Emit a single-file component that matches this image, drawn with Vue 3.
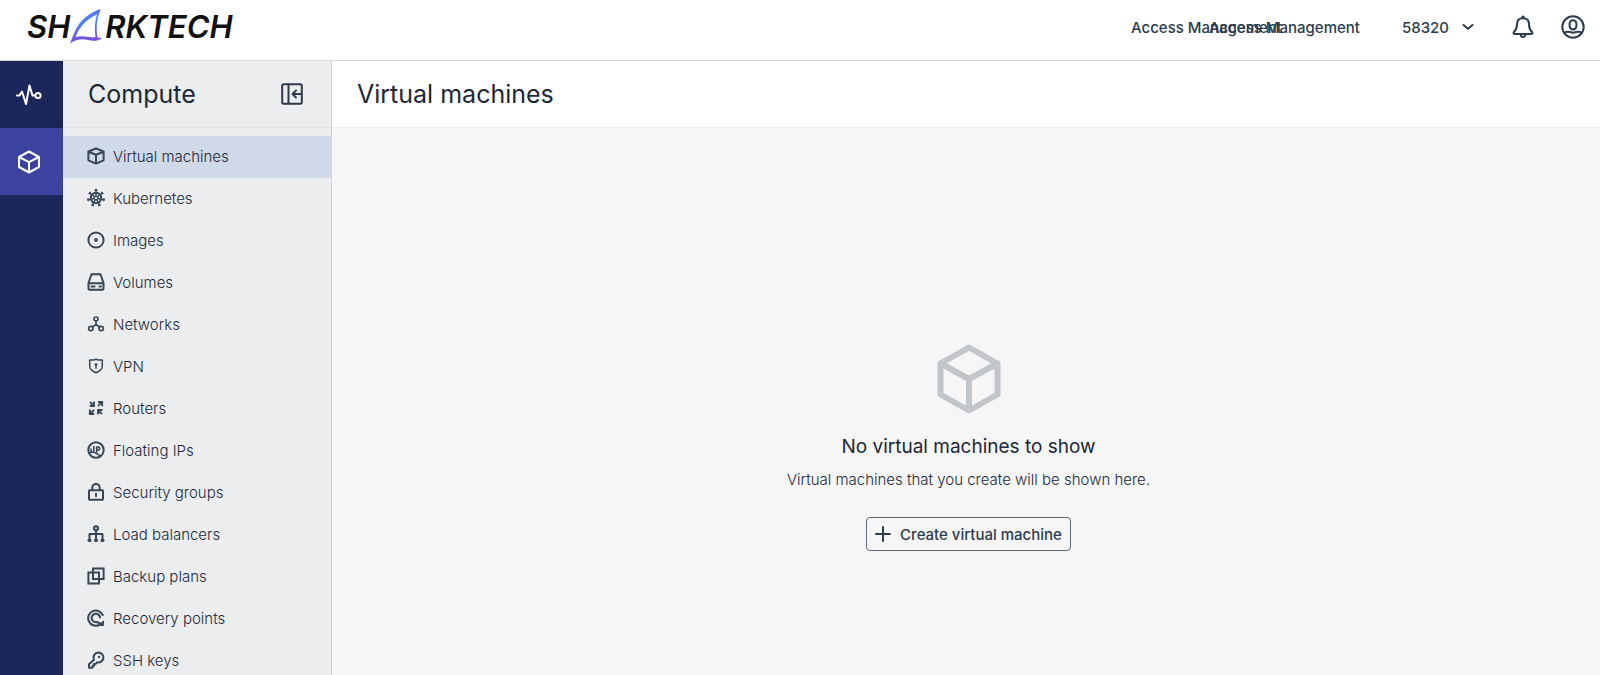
<script setup>
import { ref } from 'vue'

const account = ref('58320')
const collapsed = ref(false)
const active = ref('Virtual machines')

const items = [
  { label: 'Virtual machines', icon: 'cube' },
  { label: 'Kubernetes', icon: 'helm' },
  { label: 'Images', icon: 'disc' },
  { label: 'Volumes', icon: 'drive' },
  { label: 'Networks', icon: 'network' },
  { label: 'VPN', icon: 'shield' },
  { label: 'Routers', icon: 'router' },
  { label: 'Floating IPs', icon: 'ip' },
  { label: 'Security groups', icon: 'lock' },
  { label: 'Load balancers', icon: 'tree' },
  { label: 'Backup plans', icon: 'copy' },
  { label: 'Recovery points', icon: 'recover' },
  { label: 'SSH keys', icon: 'key' },
]

// spokes of the Kubernetes wheel, in degrees
const spokes = Array.from({ length: 7 }, (_, i) => (i * 360) / 7)
</script>

<template>
  <div class="app">
    <header class="topbar">
      <a href="#" class="logo" aria-label="Sharktech">
        <span>SH</span>
        <svg class="fin" viewBox="0 0 32 36" width="32" height="36">
          <defs>
            <linearGradient id="fin" x1="0" y1="0" x2="0.2" y2="1">
              <stop offset="0" stop-color="#5a6fe6" />
              <stop offset="0.5" stop-color="#4f83f5" />
              <stop offset="1" stop-color="#7a4be0" />
            </linearGradient>
          </defs>
          <path
            fill="url(#fin)"
            fill-rule="evenodd"
            d="M31 0C20 3 10 11 5 22L0 34.500C6 30.500 12 29.500 18 31C24 32.500 28 32 32 29L27.500 28.500C26 19 26.500 9 31 0ZM27 5.500C24.500 13 24.500 20 25.500 28C20 29.500 14 26 5.500 28C9.500 17.500 17 10 27 5.500Z"
          />
        </svg>
        <span>RKTECH</span>
      </a>
      <nav class="toplinks">
        <a href="#" class="toplink">Access Management</a>
        <a href="#" class="toplink">Access Management</a>
      </nav>
      <div class="account">
        <select v-model="account" aria-label="Account">
          <option>58320</option>
        </select>
        <svg class="chevron" viewBox="0 0 12 12" width="12" height="12"><path d="M1.500 4l4.500 3.800L10.500 4" /></svg>
      </div>
      <button class="iconbtn" aria-label="Notifications">
        <svg viewBox="0 0 24 24" width="24" height="24">
          <path d="M12 3.200c-4 0-6 2.800-6 6.300 0 4-1 5.700-3 7.500-.8.900-.4 2 .8 2h16.400c1.200 0 1.600-1.100.8-2-2-1.800-3-3.500-3-7.500 0-3.500-2-6.300-6-6.300z" />
          <circle cx="12" cy="2.300" r=".8" />
          <path d="M9.800 19.500a2.200 2.600 0 0 0 4.400 0" />
        </svg>
      </button>
      <button class="iconbtn" aria-label="Profile">
        <svg viewBox="0 0 24 24" width="24" height="24">
          <circle cx="12" cy="12" r="10.700" />
          <rect x="8.600" y="5.300" width="6.800" height="9.200" rx="3.400" />
          <path d="M3.500 17.500c3-1.800 5-1 8.500.3 3.500-1.300 5.500-2.100 8.500-.3" />
        </svg>
      </button>
    </header>

    <div class="body">
      <nav class="rail" aria-label="Sections">
        <button class="rail-item" aria-label="Overview">
          <svg viewBox="0 0 26 22" width="26" height="22">
            <path d="M1 11.500h2.500L6 7.500l4 12.500L13.500 1.500l3 10H19" />
            <circle cx="22" cy="11.500" r="2.600" />
          </svg>
        </button>
        <button class="rail-item active" aria-label="Compute">
          <svg viewBox="0 0 24 24" width="24" height="24">
            <path d="M12 1.500l10 5.500v10L12 22.500 2 17V7zM2 7l10 5.200L22 7M12 12.200v10" />
          </svg>
        </button>
      </nav>

      <aside class="sidebar">
        <div class="sidebar-head">
          <h2>Compute</h2>
          <button class="collapse" aria-label="Collapse menu" @click="collapsed = !collapsed">
            <svg viewBox="0 0 22 22" width="22" height="22">
              <rect x="1.200" y="1.200" width="19.600" height="19.600" rx="1.500" />
              <path d="M7.500 1.500v19M20 11h-8M15 7.500L11.500 11l3.500 3.500" />
            </svg>
          </button>
        </div>
        <ul v-show="!collapsed" class="menu">
          <li v-for="item in items" :key="item.label">
            <a href="#" :class="{ active: active === item.label }" @click.prevent="active = item.label">
              <svg viewBox="0 0 18 18" width="18" height="18">
                <path v-if="item.icon === 'cube'" d="M9 1.500l7.600 3v8.800L9 16.600l-7.600-3.300V4.500zM1.400 4.700L9 7.800l7.600-3.100M9 7.800v8.800" />
                <g v-else-if="item.icon === 'helm'">
                  <circle cx="9" cy="9" r="5.200" />
                  <circle cx="9" cy="9" r="1.800" stroke-width="1.300" />
                  <g v-for="a in spokes" :key="a" :transform="`rotate(${a} 9 9)`">
                    <path d="M9 7V1" stroke-width="1.500" />
                    <path d="M8.400 1h1.200" stroke-width="1.800" />
                  </g>
                </g>
                <g v-else-if="item.icon === 'disc'">
                  <circle cx="9" cy="9" r="7.600" />
                  <circle cx="9" cy="9" r="1.900" class="solid" />
                </g>
                <g v-else-if="item.icon === 'drive'">
                  <path d="M4.500 1.200h9l3 8.800v5.500q0 1.300-1.300 1.300H2.800q-1.300 0-1.300-1.300V10zM1.700 10.200h14.600" />
                  <path d="M4.500 13.500h3M12.500 13.500h1.500" />
                </g>
                <g v-else-if="item.icon === 'network'" stroke-width="1.600">
                  <circle cx="9" cy="4" r="2" />
                  <circle cx="3.800" cy="13.600" r="2.200" />
                  <circle cx="14.200" cy="13.600" r="2.200" />
                  <path d="M9 6v3.500L5.400 12M9 9.500l3.600 2.500" />
                </g>
                <g v-else-if="item.icon === 'shield'" stroke-width="1.500">
                  <path d="M9 2.200c2 .8 4 .9 6.300.9v6.200c0 3.200-2.600 5-6.300 6.400-3.700-1.400-6.300-3.200-6.300-6.400V3.100C5 3.100 7 3 9 2.200z" />
                  <circle cx="9" cy="7.600" r="1.400" class="solid" />
                  <path d="M9 8v3.200" />
                </g>
                <g v-else-if="item.icon === 'router'" stroke-width="1.800" stroke-linecap="butt" stroke-linejoin="miter">
                  <path d="M3 3l3.500 3.500M7 2.500V7H2.800M11 7.200l3.500-3.700M11 3h4.200v4.200M7 11l-4 4M2.800 10.500V15H7.200M15 15.200l-3.700-3.700M11 15.500V11h4.500" />
                </g>
                <g v-else-if="item.icon === 'ip'">
                  <circle cx="9" cy="9" r="7.700" />
                  <path d="M6.800 5.500V10M9.700 11V6h1.500a1.500 1.500 0 0 1 0 3H10" stroke-width="1.600" />
                  <path d="M2 12l4-1c3 0 4 3 7 3.500M4 8v3" stroke-width="1.500" />
                </g>
                <g v-else-if="item.icon === 'lock'">
                  <rect x="2" y="7.300" width="14" height="9.400" rx=".6" />
                  <path d="M5.300 7V4.600a3.700 3.700 0 0 1 7.400 0V7M9 10.800v2.500" />
                </g>
                <g v-else-if="item.icon === 'tree'">
                  <circle cx="9" cy="3.200" r="2" />
                  <path d="M9 5.200V15M2.500 15V9h13v6" />
                  <path d="M1.800 15.500h1.400M8.300 15.500h1.400M14.800 15.500h1.400" stroke-width="2.800" />
                </g>
                <g v-else-if="item.icon === 'copy'" stroke-linejoin="miter">
                  <path d="M6 1.400h10.600V12H6zM1.400 5.500H12v11H1.400z" />
                </g>
                <g v-else-if="item.icon === 'recover'">
                  <path d="M15.800 6.200A7.600 7.600 0 1 0 12 16" />
                  <path d="M13 8.500A4.200 4.200 0 1 0 9.500 13l4 1.500" />
                  <path d="M16.500 12.200v4.300h-4.300z" fill="currentColor" stroke-width="1" />
                </g>
                <g v-else>
                  <path d="M11.500 1.500a5 5 0 1 1-1.500 9.800L8.500 13H7v1.700H5.500v2H2v-3.500l5-4.500A5 5 0 0 1 11.500 1.500z" />
                  <circle cx="12" cy="6" r="1.200" class="solid" />
                </g>
              </svg>
              <span>{{ item.label }}</span>
            </a>
          </li>
        </ul>
      </aside>

      <main class="content">
        <div class="content-head"><h1>Virtual machines</h1></div>
        <section class="empty">
          <svg class="empty-icon" viewBox="0 0 64 70" width="64" height="70">
            <path d="M32 3.500l28.500 16v31L32 66.500l-28.500-16v-31zM3.500 19.500L32 35l28.500-15.500M32 35v31" />
          </svg>
          <h3>No virtual machines to show</h3>
          <p>Virtual machines that you create will be shown here.</p>
          <button class="create">
            <svg viewBox="0 0 16 16" width="16" height="16"><path d="M8 1v14M1 8h14" /></svg>
            Create virtual machine
          </button>
        </section>
      </main>
    </div>
  </div>
</template>

<style>
body {
  margin: 0;
  overflow: hidden;
}
</style>

<style scoped>
.app {
  height: 100vh;
  display: flex;
  flex-direction: column;
  font-family: Inter, "Liberation Sans", sans-serif;
  font-size: 15px;
  color: #2c3c4e;
  background: #f6f6f6;
}
h1, h2, h3, p, ul { margin: 0; padding: 0; font-weight: 400; }
a { color: inherit; text-decoration: none; }
button {
  padding: 0;
  border: none;
  background: none;
  font: inherit;
  color: inherit;
  cursor: pointer;
}
svg {
  flex: none;
  display: block;
  fill: none;
  stroke: currentColor;
  stroke-width: 2;
  stroke-linecap: round;
  stroke-linejoin: round;
}
.solid { fill: currentColor; stroke: none; }

/* top bar */
.topbar {
  flex: none;
  height: 61px;
  display: flex;
  align-items: center;
  padding: 0 15px 6px 27px;
  box-sizing: border-box;
  background: #fff;
  border-bottom: 1px solid #d5d7da;
}
.logo {
  display: flex;
  align-items: center;
  margin-right: auto;
  font-size: 31px;
  line-height: 36px;
  font-weight: 600;
  font-style: italic;
  color: #111;
}
.fin { stroke: none; margin-right: 3px; }
.toplinks { display: flex; }
/* fixed slots: long labels run over into the next one */
.toplink {
  width: 78px;
  white-space: nowrap;
  font-weight: 500;
}
.account {
  display: flex;
  align-items: center;
  gap: 12px;
  margin: 0 37px 0 115px;
}
.account select {
  appearance: none;
  border: none;
  padding: 0;
  background: none;
  font: inherit;
  font-weight: 500;
  color: inherit;
}
.iconbtn + .iconbtn { margin-left: 26px; }

.body { flex: 1; min-height: 0; display: flex; }

/* icon rail */
.rail {
  flex: none;
  width: 63px;
  background: #1d265a;
  color: #fff;
}
.rail-item {
  width: 100%;
  height: 67px;
  display: flex;
  align-items: center;
  justify-content: center;
  padding-right: 5px;
}
.rail-item.active { background: #3b439f; }

/* section menu */
.sidebar {
  flex: none;
  width: 269px;
  box-sizing: border-box;
  border-right: 1px solid #d2d5d8;
  background: #ebedef;
  overflow: hidden;
}
.sidebar-head {
  height: 66px;
  display: flex;
  align-items: center;
  justify-content: space-between;
  padding: 0 28px 0 25px;
  border-bottom: 1px solid #e0e3e7;
}
h1, h2 { font-size: 25px; font-weight: 400; color: #1c2838; }
.menu { list-style: none; padding-top: 8px; }
.menu a {
  display: flex;
  align-items: center;
  gap: 8px;
  height: 42px;
  padding: 0 0 2px 24px;
  box-sizing: border-box;
  font-weight: 300;
  color: #1c2a3c;
}
.menu svg { color: #364757; }
.menu a.active { background: #d0d9e8; }

/* content */
.content {
  flex: 1;
  min-width: 0;
  display: flex;
  flex-direction: column;
}
.content-head {
  flex: none;
  height: 66px;
  display: flex;
  align-items: center;
  padding-left: 25px;
  background: #fff;
  border-bottom: 1px solid #e8ebf2;
}
.empty {
  flex: 1;
  display: flex;
  flex-direction: column;
  align-items: center;
  justify-content: center;
  padding: 92px 0 0 5px;
}
.empty-icon { color: #c2c5ca; stroke-width: 6; }
.empty h3 {
  margin-top: 20px;
  font-size: 19px;
  line-height: 26px;
  font-weight: 400;
  color: #1c2838;
}
.empty p {
  margin-top: 8px;
  line-height: 24px;
  font-weight: 300;
  color: #1c2a3c;
}
.create {
  display: flex;
  align-items: center;
  gap: 9px;
  height: 34px;
  margin-top: 25px;
  padding: 0 8px;
  box-sizing: border-box;
  border: 1px solid #5f6b7a;
  border-radius: 4px;
  font-weight: 550;
}
</style>
